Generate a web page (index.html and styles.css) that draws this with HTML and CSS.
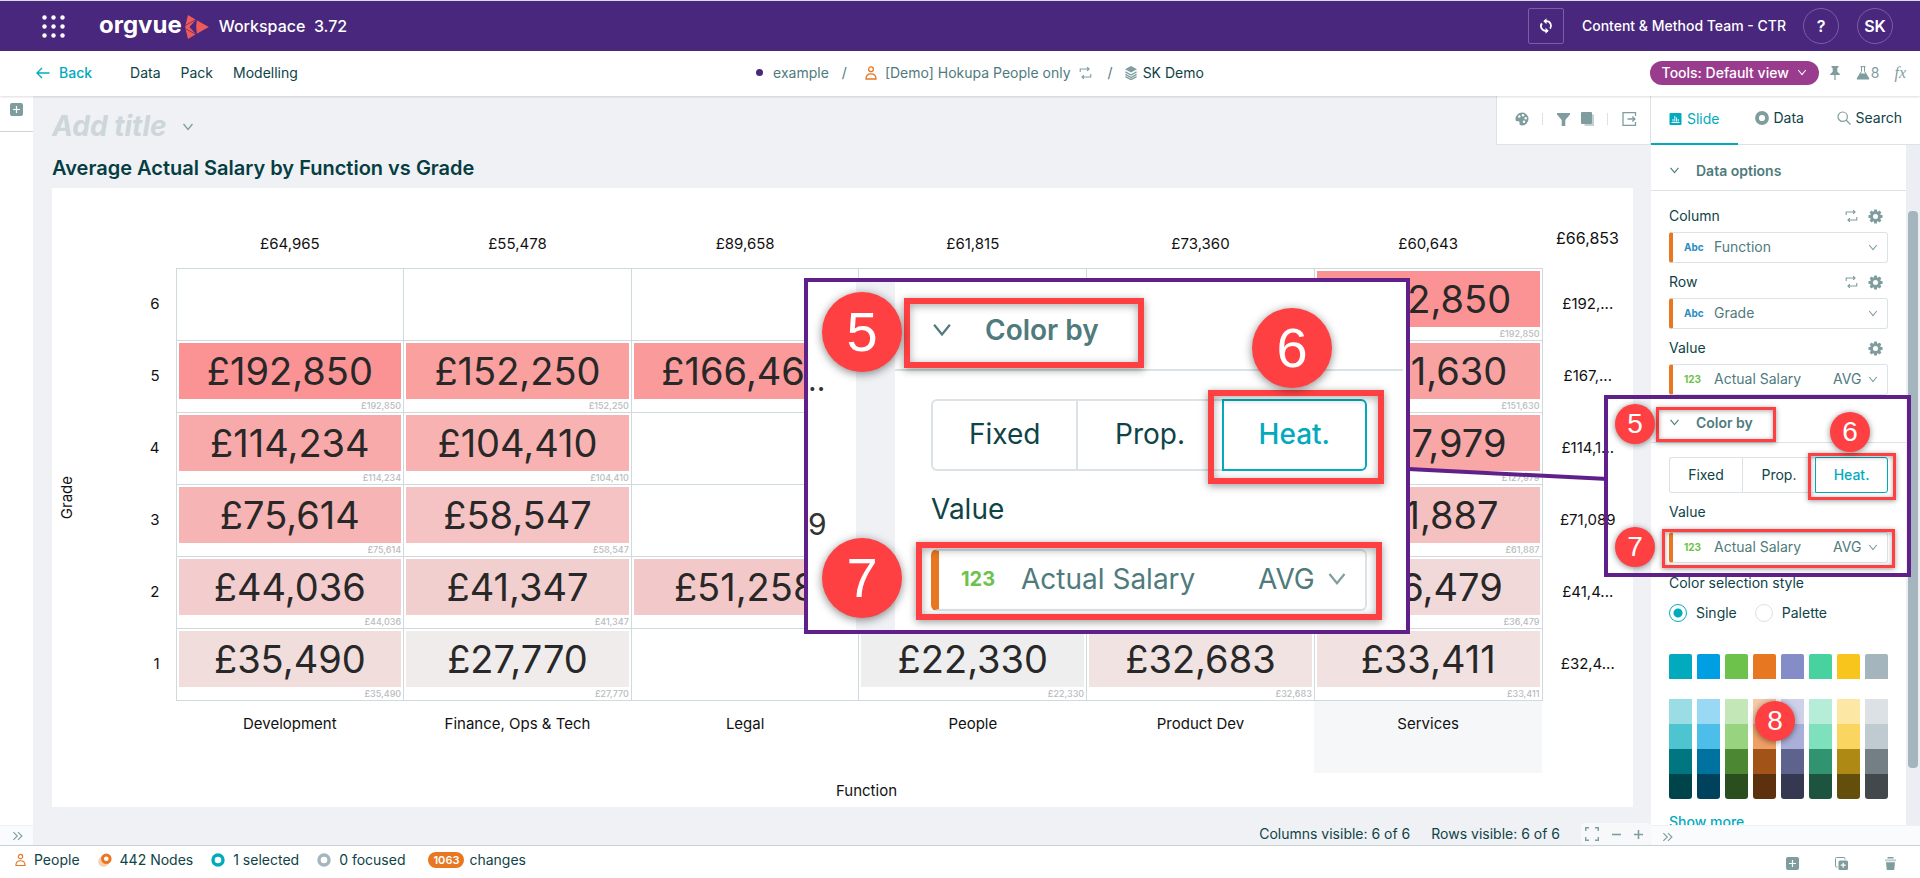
FILE: index.html
```html
<!DOCTYPE html>
<html lang="en">
<head>
<meta charset="utf-8">
<title>Workspace</title>
<link rel="stylesheet" href="styles.css">
</head>
<body>
<svg class="sprite" aria-hidden="true">
  <symbol id="chev" viewBox="0 0 12 8"><path d="M1.500 1 6 6.500l4.500-5.500" fill="none" stroke="currentColor" stroke-width="1.300"/></symbol>
  <symbol id="dchev" viewBox="0 0 12 10"><path d="M1.500.8 5.800 5l-4.300 4.200M6.500.8 10.800 5 6.500 9.200" fill="none" stroke="currentColor" stroke-width="1.200"/></symbol>
  <symbol id="plus" viewBox="0 0 13 13"><rect width="13" height="13" rx="2" fill="currentColor"/><path d="M6.500 3v7M3 6.500h7" stroke="#fff" stroke-width="1.200"/></symbol>
  <symbol id="person" viewBox="0 0 12 14"><circle cx="6" cy="3.300" r="2.400" fill="none" stroke="currentColor" stroke-width="1.300"/><path d="M1 13c0-3.400 2-5.200 5-5.200s5 1.800 5 5.200z" fill="none" stroke="currentColor" stroke-width="1.300"/></symbol>
  <symbol id="repeat" viewBox="0 0 14 14"><path d="M1.300 6V2.700h9M8.800.8l2 1.900-2 1.900M12.700 8v3.300h-9M5.200 13.200l-2-1.900 2-1.900" fill="none" stroke="currentColor" stroke-width="1.200"/></symbol>
  <symbol id="gear" viewBox="0 0 16 16"><g fill="currentColor"><rect x="6.400" y="0.500" width="3.200" height="15" rx=".6"/><rect x="6.400" y="0.500" width="3.200" height="15" rx=".6" transform="rotate(45 8 8)"/><rect x="6.400" y="0.500" width="3.200" height="15" rx=".6" transform="rotate(90 8 8)"/><rect x="6.400" y="0.500" width="3.200" height="15" rx=".6" transform="rotate(135 8 8)"/><circle cx="8" cy="8" r="5.800"/></g><circle cx="8" cy="8" r="2.700" fill="#fff"/></symbol>
</svg>

<header class="topbar">
  <svg class="dots" viewBox="0 0 24 24" fill="#fff"><circle cx="2.500" cy="2.500" r="2.200"/><circle cx="11.500" cy="2.500" r="2.200"/><circle cx="20.500" cy="2.500" r="2.200"/><circle cx="2.500" cy="11.500" r="2.200"/><circle cx="11.500" cy="11.500" r="2.200"/><circle cx="20.500" cy="11.500" r="2.200"/><circle cx="2.500" cy="20.500" r="2.200"/><circle cx="11.500" cy="20.500" r="2.200"/><circle cx="20.500" cy="20.500" r="2.200"/></svg>
  <span class="brand">orgvue</span>
  <svg class="brand-mark" viewBox="0 0 24 24" fill="#ee5a5a"><path d="M3 0 10.500 4.500.5 10z"/><path d="M.5 14 10.500 19.500 3 24z"/><path d="M11.800 5.300 23.800 12l-12 6.700-.6-6.700z"/><path d="M.3 10.800 10.800 5 4.500 12l6.300 7L.3 13.200z"/></svg>
  <span class="product">Workspace&nbsp; 3.72</span>
  <button class="sync" aria-label="Sync"><svg viewBox="0 0 14 16" fill="none" stroke="#fff" stroke-width="1.800"><path d="M5 3.200h2.500a4.600 4.600 0 0 1 3.600 7.400M9 12.800H6.500a4.600 4.600 0 0 1-3.600-7.400"/><path d="M7.500.2v6L4.300 3.200zM6.500 15.800v-6l3.200 3z" fill="#fff" stroke="none"/></svg></button>
  <span class="tenant">Content &amp; Method Team - CTR</span>
  <button class="round">?</button>
  <button class="round user">SK</button>
</header>

<nav class="navbar">
  <div class="menu">
    <a class="back" href="#"><svg viewBox="0 0 14 12" fill="none" stroke="currentColor" stroke-width="1.300"><path d="M13.500 6H1.200M6 1 1 6l5 5"/></svg>Back</a>
    <a href="#">Data</a><a href="#">Pack</a><a href="#">Modelling</a>
  </div>
  <div class="crumbs">
    <i class="dot"></i><a href="#">example</a><span class="slash">/</span>
    <svg class="i-person"><use href="#person"/></svg><a href="#">[Demo] Hokupa People only</a><svg class="i-repeat"><use href="#repeat"/></svg><span class="slash wide">/</span>
    <svg class="i-layers" viewBox="0 0 12 14"><path d="M6 0l6 3.300-6 3.300L0 3.300z" fill="currentColor"/><path d="M.4 5.900 6 9l5.600-3.100M.4 8.400 6 11.500l5.600-3.100M.4 10.600 6 13.600l5.600-3" fill="none" stroke="currentColor" stroke-width="1.300"/></svg><strong>SK Demo</strong>
  </div>
  <div class="tools">
    <button class="pill">Tools: Default view<svg><use href="#chev"/></svg></button>
    <svg class="i-pin" viewBox="0 0 10 14" fill="currentColor"><path d="M1.500 0h7v1.200l-1.200.8v3.800L9.800 8v1H5.600v5H4.400V9H.2V8l2.500-2.200V2l-1.200-.8z"/></svg>
    <span class="flask"><svg viewBox="0 0 14 14"><path d="M4.500.6h5M5.500.6v4.900L1.200 12.500h11.600L8.500 5.500V.6" fill="none" stroke="currentColor"/><path d="M4 7.500h6l3.300 6H.7z" fill="currentColor"/></svg>8</span>
    <span class="fx">fx</span>
  </div>
</nav>

<main class="workspace">
  <aside class="rail">
    <button class="rail-add" aria-label="Add slide"><svg><use href="#plus"/></svg></button>
    <button class="rail-open" aria-label="Expand"><svg><use href="#dchev"/></svg></button>
  </aside>

  <section class="canvas">
    <div class="canvas-head">
      <input class="title-input" type="text" placeholder="Add title" aria-label="Slide title">
      <svg class="title-chev"><use href="#chev"/></svg>
      <div class="toolbar">
        <svg class="t-palette" viewBox="0 0 14 14"><path d="M7 .5a6.500 6.500 0 0 0-6.500 6.600C.5 9 1.300 9.500 2.500 9.200c1.500-.3 2.300.3 2 1.800-.3 1.600.5 2.500 2.500 2.500A6.500 6.500 0 0 0 7 .5z" fill="currentColor"/><g fill="#fff"><circle cx="4.300" cy="4.500" r="1.200"/><circle cx="8" cy="3.300" r="1.200"/><circle cx="10.700" cy="6.300" r="1.200"/><circle cx="9" cy="9.800" r="1.200"/></g></svg>
        <i class="sep"></i>
        <svg class="t-funnel" viewBox="0 0 13 13"><path d="M0 0h13v1.500L8.300 7v6H4.700V7L0 1.500z" fill="currentColor"/></svg>
        <svg class="t-copy" viewBox="0 0 13 14"><path d="M3.500 2.500H13V14H3.500z" fill="#c4d0d1"/><rect width="11" height="12" rx="1" fill="currentColor"/></svg>
        <i class="sep"></i>
        <svg class="t-export" viewBox="0 0 15 14" fill="none" stroke="currentColor" stroke-width="1.300"><path d="M13.500 4V.7H1v12.600h12.500V10M5.500 7h7.300M10.300 4.500 12.900 7l-2.600 2.500"/></svg>
      </div>
    </div>
    <h1 class="chart-title">Average Actual Salary by Function vs Grade</h1>

    <div class="card">
      <div class="y-label"><span>Grade</span></div>
      <div class="plot">
        <table class="heat">
          <colgroup><col class="c-label"><col><col><col><col><col><col><col class="c-total"></colgroup>
          <thead><tr><td></td><th>£64,965</th><th>£55,478</th><th>£89,658</th><th>£61,815</th><th>£73,360</th><th>£60,643</th><th class="grand">£66,853</th></tr></thead>
          <tbody>
            <tr><th>6</th><td></td><td></td><td></td><td></td><td></td><td><b style="background:#fb9293">£192,850</b><small>£192,850</small></td><td class="total">£192,...</td></tr>
            <tr><th>5</th><td><b style="background:#fb9293">£192,850</b><small>£192,850</small></td><td><b style="background:#faa09f">£152,250</b><small>£152,250</small></td><td><b style="background:#fa9a9a">£166,460</b></td><td></td><td></td><td><b style="background:#f8a2a2">£151,630</b><small>£151,630</small></td><td class="total">£167,...</td></tr>
            <tr><th>4</th><td><b style="background:#f8aaaa">£114,234</b><small>£114,234</small></td><td><b style="background:#f7b2b1">£104,410</b><small>£104,410</small></td><td></td><td></td><td></td><td><b style="background:#f9a6a6">£127,979</b><small>£127,979</small></td><td class="total">£114,1...</td></tr>
            <tr><th>3</th><td><b style="background:#f7b4b4">£75,614</b><small>£75,614</small></td><td><b style="background:#f5c3c3">£58,547</b><small>£58,547</small></td><td></td><td></td><td></td><td><b style="background:#f5c1c0">£61,887</b><small>£61,887</small></td><td class="total">£71,089</td></tr>
            <tr><th>2</th><td><b style="background:#f3cdcd">£44,036</b><small>£44,036</small></td><td><b style="background:#f2cfcf">£41,347</b><small>£41,347</small></td><td><b style="background:#f3c8c8">£51,258</b></td><td></td><td></td><td><b style="background:#f2d9d9">£36,479</b><small>£36,479</small></td><td class="total">£41,4...</td></tr>
            <tr><th>1</th><td><b style="background:#f0dddc">£35,490</b><small>£35,490</small></td><td><b style="background:#f0eceb">£27,770</b><small>£27,770</small></td><td></td><td><b style="background:#eeeeee">£22,330</b><small>£22,330</small></td><td><b style="background:#f0e3e2">£32,683</b><small>£32,683</small></td><td><b style="background:#f1e1e0">£33,411</b><small>£33,411</small></td><td class="total">£32,4...</td></tr>
          </tbody>
          <tfoot><tr><td></td><th>Development</th><th>Finance, Ops &amp; Tech</th><th>Legal</th><th>People</th><th>Product Dev</th><th class="hover">Services</th><td></td></tr></tfoot>
        </table>
        <div class="x-label">Function</div>
      </div>
    </div>

    <div class="canvas-foot">
      <span>Columns visible: 6 of 6</span><span>Rows visible: 6 of 6</span>
      <div class="zoomer">
        <svg viewBox="0 0 14 14" fill="none" stroke="currentColor" stroke-width="1.400"><path d="M.7 4V.7H4M10 .7h3.300V4M13.300 10v3.300H10M4 13.300H.7V10"/></svg>
        <svg class="z-minus" viewBox="0 0 8 8" stroke="currentColor" stroke-width="1.400"><path d="M0 4h8"/></svg>
        <svg class="z-plus" viewBox="0 0 8 8" stroke="currentColor" stroke-width="1.400"><path d="M0 4h8M4 0v8"/></svg>
      </div>
    </div>
  </section>

  <aside class="panel">
    <div class="tabs">
      <button class="tab on"><svg viewBox="0 0 12 12"><rect width="12" height="12" rx="1" fill="currentColor"/><path d="M2 9.500h8M3.500 8.500V6M5.300 8.500V3M7 8.500V4.500M8.700 8.500V6" stroke="#fff" stroke-width=".9"/></svg>Slide</button>
      <button class="tab"><svg viewBox="0 0 14 14"><circle cx="7" cy="7" r="5" fill="none" stroke="#7f9d9e" stroke-width="3.800"/></svg>Data</button>
      <button class="tab"><svg viewBox="0 0 14 14" fill="none" stroke="#7f9d9e" stroke-width="1.200"><circle cx="5.700" cy="5.700" r="4.700"/><path d="m9 9 4.500 4.500"/></svg>Search</button>
    </div>
    <div class="panel-body">
      <div class="scroller">
        <h2 class="group"><svg><use href="#chev"/></svg>Data options</h2>
        <div class="fields">
          <div class="label-row"><label for="col">Column</label><svg class="i-repeat"><use href="#repeat"/></svg><svg class="i-gear"><use href="#gear"/></svg></div>
          <div class="drop"><span class="type abc">Abc</span><select id="col"><option>Function</option></select><svg><use href="#chev"/></svg></div>
          <div class="label-row"><label for="row">Row</label><svg class="i-repeat"><use href="#repeat"/></svg><svg class="i-gear"><use href="#gear"/></svg></div>
          <div class="drop"><span class="type abc">Abc</span><select id="row"><option>Grade</option></select><svg><use href="#chev"/></svg></div>
          <div class="label-row"><label for="val">Value</label><svg class="i-gear"><use href="#gear"/></svg></div>
          <div class="drop"><span class="type digits">123</span><select id="val"><option>Actual Salary</option></select><select class="agg" aria-label="Aggregate"><option>AVG</option></select><svg><use href="#chev"/></svg></div>
        </div>
        <h2 class="group"><svg><use href="#chev"/></svg>Color by</h2>
        <div class="fields color">
          <div class="seg"><button>Fixed</button><button>Prop.</button><button class="on">Heat.</button></div>
          <div class="label-row"><label for="cval">Value</label></div>
          <div class="drop"><span class="type digits">123</span><select id="cval"><option>Actual Salary</option></select><select class="agg" aria-label="Color aggregate"><option>AVG</option></select><svg><use href="#chev"/></svg></div>
          <div class="style-label">Color selection style</div>
          <div class="radios"><label><input type="radio" name="style" checked>Single</label><label><input type="radio" name="style">Palette</label></div>
          <div class="swatches"><i style="background:#02aabd"></i><i style="background:#009fe3"></i><i style="background:#6cc24a"></i><i style="background:#e87722"></i><i style="background:#858dc8"></i><i style="background:#48d2a0"></i><i style="background:#f8c51c"></i><i style="background:#a4b5bd"></i></div>
          <div class="shades">
            <div><i style="background:#9bdde4"></i><i style="background:#4ec4d1"></i><i style="background:#007680"></i><i style="background:#00444b"></i></div>
            <div><i style="background:#99d9f3"></i><i style="background:#4dbdea"></i><i style="background:#00729f"></i><i style="background:#00425b"></i></div>
            <div><i style="background:#c4e7b7"></i><i style="background:#98d480"></i><i style="background:#4c8834"></i><i style="background:#2b4e1e"></i></div>
            <div><i style="background:#f6c9a7"></i><i style="background:#f0a066"></i><i style="background:#a25318"></i><i style="background:#5d300e"></i></div>
            <div><i style="background:#ced1e9"></i><i style="background:#a9afd9"></i><i style="background:#5d638c"></i><i style="background:#353850"></i></div>
            <div><i style="background:#b6edd9"></i><i style="background:#7fe0bc"></i><i style="background:#329370"></i><i style="background:#1d5440"></i></div>
            <div><i style="background:#fce8a4"></i><i style="background:#fad660"></i><i style="background:#ae8a14"></i><i style="background:#634f0b"></i></div>
            <div><i style="background:#dbe1e5"></i><i style="background:#bfcbd1"></i><i style="background:#737f84"></i><i style="background:#42484b"></i></div>
          </div>
          <a class="more" href="#">Show more</a>
        </div>
      </div>
      <div class="track"><i class="thumb"></i></div>
    </div>
    <div class="panel-foot"><svg><use href="#dchev"/></svg></div>
  </aside>
</main>

<footer class="status">
  <svg class="i-person"><use href="#person"/></svg><span class="s1">People</span>
  <svg class="ring" viewBox="0 0 14 14"><circle cx="5.500" cy="8.500" r="5.300" fill="#f8d0b0"/><circle cx="8.300" cy="5.700" r="3.800" fill="#fff" stroke="#e87722" stroke-width="3"/></svg><span class="s2">442 Nodes</span>
  <svg class="ring" viewBox="0 0 14 14"><circle cx="7" cy="7" r="5" fill="none" stroke="#02aabd" stroke-width="3.400"/></svg><span class="s2">1 selected</span>
  <svg class="ring" viewBox="0 0 14 14"><circle cx="7" cy="7" r="5" fill="none" stroke="#a4b5bd" stroke-width="3.400"/></svg><span class="s3">0 focused</span>
  <span class="count">1063</span><span>changes</span>
  <div class="actions">
    <button aria-label="Add"><svg><use href="#plus"/></svg></button>
    <button aria-label="Duplicate"><svg viewBox="0 0 13 13"><path d="M2.500 10H1.500a1 1 0 0 1-1-1V1.500a1 1 0 0 1 1-1H9a1 1 0 0 1 1 1v1" fill="none" stroke="currentColor"/><rect x="3.500" y="3.500" width="9.500" height="9.500" rx="1.500" fill="currentColor"/><path d="M8.200 5.700v5M5.700 8.200h5" stroke="#fff" stroke-width="1.200"/></svg></button>
    <button aria-label="Delete"><svg viewBox="0 0 13 13" fill="currentColor"><path d="M3.500 0h6v1.500h-6z"/><path d="M1 2.300h11v2H1z" opacity=".5"/><path d="M2 5.300h9L10.200 13H2.800z"/></svg></button>
  </div>
</footer>

<div class="notes">
  <svg class="link" viewBox="0 0 200 16" preserveAspectRatio="none"><path d="M0 3 200 13" stroke="#5f2189" stroke-width="4"/></svg>
  <div class="frame">
    <i class="mark m-title"></i><i class="mark m-heat"></i><i class="mark m-drop"></i>
    <b class="num n5">5</b><b class="num n6">6</b><b class="num n7">7</b>
  </div>
  <b class="num n8">8</b>
  <div class="lens">
    <div class="lens-side"><span class="cut-dots">..</span><span class="cut-nine">9</span></div>
    <div class="lens-gap"></div>
    <div class="lens-panel">
      <h2 class="group"><svg><use href="#chev"/></svg>Color by</h2>
      <div class="fields color">
        <div class="seg"><button>Fixed</button><button>Prop.</button><button class="on">Heat.</button></div>
        <div class="label-row"><label for="lval">Value</label></div>
        <div class="drop"><span class="type digits">123</span><select id="lval"><option>Actual Salary</option></select><select class="agg" aria-label="Enlarged aggregate"><option>AVG</option></select><svg><use href="#chev"/></svg></div>
      </div>
    </div>
    <i class="mark m-title"></i><i class="mark m-heat"></i><i class="mark m-drop"></i>
    <b class="num n5">5</b><b class="num n6">6</b><b class="num n7">7</b>
  </div>
</div>
</body>
</html>
```
FILE: styles.css
```css
* { box-sizing: border-box; }
:root {
  --u: 1px;
  --ink: #0e4347;
  --mid: #4f7b7d;
  --soft: #7f9d9e;
  --teal: #02aabd;
  --line: #dbe3e6;
  --orange: #e87722;
}
body {
  margin: 0;
  height: 100vh;
  display: flex;
  flex-direction: column;
  position: relative;
  overflow: hidden;
  font: 14px/20px Inter, "Liberation Sans", sans-serif;
  color: var(--ink);
  background: #fff;
}
button, input, select { font: inherit; color: inherit; background: none; border: 0; padding: 0; margin: 0; }
select { appearance: none; outline: 0; }
a { color: inherit; text-decoration: none; }
svg { display: block; flex: none; }
i { display: block; }
.sprite { position: absolute; width: 0; height: 0; }

/* Top bar */
.topbar {
  display: flex;
  align-items: center;
  height: 51px;
  flex: none;
  padding: 0 27px 0 42px;
  background: #48277c;
  border-top: 1px solid #dcdde6;
  color: #fff;
}
.dots { width: 24px; height: 24px; margin: 2px 33px 0 0; }
.brand { font: 700 24px/24px Inter, sans-serif; margin: 0 3px 2px 0; }
.brand-mark { width: 24px; height: 24px; margin: 1px 10px 0 0; }
.product { font-size: 16px; font-weight: 500; }
.sync { display: grid; place-items: center; width: 36px; height: 36px; margin-left: auto; border: 1px solid #7a5fa3; border-radius: 2px; }
.sync svg { width: 14px; height: 16px; }
.tenant { font-weight: 500; margin: 0 17px 0 18px; }
.round { width: 36px; height: 36px; border: 1px solid #7a5fa3; border-radius: 50%; font-size: 16px; font-weight: 600; margin-right: 18px; }
.user { margin-right: 0; }

/* Navigation */
.navbar {
  display: grid;
  grid-template-columns: 1fr auto 1fr;
  align-items: center;
  height: 45px;
  flex: none;
  padding: 0 14px 2px 36px;
  box-shadow: 0 1px 2px #0002;
  z-index: 1;
}
.menu { display: flex; gap: 20px; }
.back { display: flex; align-items: center; gap: 9px; color: var(--teal); font-weight: 500; margin-right: 18px; }
.back svg { width: 14px; height: 12px; }
.crumbs { display: flex; align-items: center; padding-left: 18px; color: var(--mid); }
.crumbs strong { font-weight: 400; color: var(--ink); }
.dot { width: 7px; height: 7px; border-radius: 50%; background: #48277c; margin-right: 10px; }
.slash { margin: 0 18px 0 13px; }
.slash.wide { margin: 0 12px 0 16px; }
.i-person { width: 12px; height: 14px; color: var(--orange); margin-right: 8px; }
.i-repeat { width: 13px; height: 14px; color: var(--soft); }
.crumbs .i-repeat { margin-left: 8px; }
.i-layers { width: 12px; height: 14px; color: var(--soft); margin-right: 6px; }
.tools { display: flex; align-items: center; justify-content: flex-end; color: var(--soft); }
.pill { display: flex; align-items: center; gap: 8px; height: 24px; padding: 0 12px; border-radius: 12px; background: #9a3c8d; color: #fff; font-weight: 500; }
.pill svg { width: 10px; height: 7px; }
.i-pin { width: 10px; height: 14px; margin: 0 16px 0 11px; }
.flask { display: flex; align-items: center; gap: 1px; }
.flask svg { width: 14px; height: 14px; }
.fx { font: italic 16px/20px "Liberation Serif", serif; margin-left: 15px; }

/* Workspace */
.workspace { display: grid; grid-template-columns: 33px 1fr 269px; flex: 1; min-height: 0; }
.rail { display: flex; flex-direction: column; justify-content: space-between; }
.rail-add { height: 36px; padding: 4px 0 0 10px; border-bottom: 1px solid #cbd5d7; color: var(--soft); }
.rail-add svg { width: 13px; height: 13px; margin-bottom: 12px; }
.rail-open { height: 20px; padding-left: 12px; background: #f9fbfc; border-top: 1px solid #edf1f3; color: var(--soft); }
.rail-open svg { width: 11px; height: 10px; }

.canvas { display: flex; flex-direction: column; min-width: 0; background: #f0f1f5; }
.canvas-head { display: flex; align-items: flex-start; padding-left: 19px; }
.title-input { width: 124px; height: 34px; margin-top: 13px; font: italic 700 28px/34px Inter, sans-serif; }
.title-input::placeholder { color: #cdd6da; opacity: 1; }
.title-chev { width: 12px; height: 8px; margin: 27px auto 0 6px; color: var(--soft); }
.toolbar { display: flex; align-items: center; height: 49px; padding: 0 13px 2px 18px; background: #fff; border: solid var(--line); border-width: 0 1px 1px 1px; color: var(--soft); }
.t-palette { width: 14px; height: 14px; }
.sep { width: 1px; height: 12px; background: var(--line); margin: 0 14px 0 13px; }
.t-funnel { width: 13px; height: 13px; margin-right: 11px; }
.t-copy { width: 13px; height: 14px; }
.t-export { width: 15px; height: 14px; }
.chart-title { margin: 11px 0 8px 19px; font-size: 20px; line-height: 24px; font-weight: 600; color: #063d42; }

.card { flex: 1; display: flex; min-height: 0; margin: 0 18px 0 19px; background: #fff; color: #111; }
.y-label { width: 30px; display: grid; place-items: center; flex: none; font-size: 15px; }
.y-label span { writing-mode: vertical-rl; transform: rotate(180deg); }
.plot { flex: 1; min-width: 0; }
.heat { width: 100%; table-layout: fixed; border-collapse: collapse; border-spacing: 0; font-size: 15px; }
.heat th { font-weight: 400; }
.heat td, .heat th { padding: 0; }
.c-label { width: 94px; }
.c-total { width: 91px; }
.heat thead tr { height: 80px; }
.heat thead th { padding-top: 32px; }
.heat thead .grand { font-size: 16px; padding: 20px 0 0; }
.heat tbody tr { height: 72px; }
.heat tbody th { text-align: right; padding-right: 16px; }
.heat tbody td { border: 1px solid #cfdadd; vertical-align: top; }
.heat tbody td.total { border: 0; vertical-align: middle; text-align: center; }
.heat b { display: block; height: 56px; margin: 2px 2px 0; text-align: center; font-weight: 400; font-size: 38px; line-height: 56px; color: #282828; }
.heat small { display: block; height: 13px; padding: 1px 2px 0 0; text-align: right; font-size: 9px; line-height: 12px; color: #b9bcbe; font-weight: 500; }
.heat tfoot tr { height: 73px; }
.heat tfoot th { vertical-align: top; padding-top: 13px; }
.heat tfoot .hover { background: #f5f7f9; }
.x-label { margin-top: 8px; padding-left: 18px; text-align: center; font-size: 15px; }

.canvas-foot { display: flex; align-items: center; justify-content: flex-end; gap: 21px; height: 38px; flex: none; padding-top: 16px; }
.zoomer { display: flex; align-items: center; gap: 13px; height: 22px; padding: 0 8px 0 4px; background: #f6f8fa; border-radius: 4px; color: var(--soft); }
.zoomer svg { width: 14px; height: 14px; }
.zoomer .z-minus, .zoomer .z-plus { width: 9px; height: 9px; }

/* Settings panel */
.panel { display: flex; flex-direction: column; min-height: 0; background: #fff; }
.tabs { display: flex; height: 49px; flex: none; border-bottom: 1px solid var(--line); padding-right: 18px; }
.tab { display: flex; align-items: center; gap: 5px; padding-bottom: 4px; }
.tab svg { width: 14px; height: 14px; }
.tab:last-child { margin-left: auto; }
.tab.on { color: var(--teal); padding: 0 18px 2px; border-bottom: 2px solid var(--teal); margin: 0 17px -1px 0; }
.tab.on svg { width: 13px; height: 12px; }
.panel-body { display: flex; flex: 1; min-height: 0; }
.scroller { flex: 1; overflow: hidden; }
.track { width: 14px; padding: 66px 2px 0; background: #ebeff3; }
.thumb { height: 557px; border-radius: 4px; background: #a4b5bd; }
.panel-foot { height: 20px; flex: none; padding: 6px 0 0 11px; background: #f9fbfc; border-top: 1px solid #edf1f3; color: var(--soft); }
.panel-foot svg { width: 11px; height: 10px; }

.group { display: flex; align-items: center; margin: 0; height: calc(var(--u) * 46); padding: calc(var(--u) * 6) 0 0 calc(var(--u) * 18); border-bottom: var(--u) solid var(--line); font-size: calc(var(--u) * 14); line-height: calc(var(--u) * 20); font-weight: 600; color: var(--mid); }
.group svg { width: calc(var(--u) * 11); height: calc(var(--u) * 7); margin-right: calc(var(--u) * 16); }
.fields { padding: calc(var(--u) * 11) calc(var(--u) * 18) 0; font-size: calc(var(--u) * 14); line-height: calc(var(--u) * 20); }
.fields.color { padding-top: calc(var(--u) * 14); }
.label-row { display: flex; align-items: center; gap: calc(var(--u) * 10); height: calc(var(--u) * 30); padding: 0 calc(var(--u) * 5) calc(var(--u) * 2) 0; }
.drop + .label-row { margin-top: calc(var(--u) * 5); }
.label-row label { margin-right: auto; }
.i-gear { width: 15px; height: 15px; color: var(--soft); }
.drop { display: flex; align-items: center; height: calc(var(--u) * 31); border: var(--u) solid var(--line); border-left: calc(var(--u) * 4) solid var(--orange); border-radius: calc(var(--u) * 3); padding: 0 calc(var(--u) * 9) var(--u) 0; color: var(--mid); }
.drop select:not(.agg) { flex: 1; min-width: 0; }
.agg { margin-right: calc(var(--u) * 6); }
.drop svg { width: calc(var(--u) * 10); height: calc(var(--u) * 7); color: var(--soft); }
.type { width: calc(var(--u) * 41); padding-left: calc(var(--u) * 11); font-size: calc(var(--u) * 10); font-weight: 700; }
.abc { color: #2b8cc4; }
.digits { color: #6cc24a; }
.seg { display: grid; grid-template-columns: 1fr 1fr 1fr; height: calc(var(--u) * 36); margin-bottom: calc(var(--u) * 5); }
.seg button { border: var(--u) solid var(--line); border-right: 0; padding-bottom: var(--u); }
.seg button:first-child { border-radius: calc(var(--u) * 3) 0 0 calc(var(--u) * 3); }
.seg .on { border: var(--u) solid var(--teal); border-radius: 0 calc(var(--u) * 3) calc(var(--u) * 3) 0; color: var(--teal); font-weight: 500; }
.seg + .label-row + .drop { margin-top: calc(var(--u) * 4); }
.scroller .group + .fields + .group { margin-top: 2px; }
.style-label { margin-top: 10px; }
.radios { display: flex; gap: 18px; margin-top: 10px; }
.radios label { display: flex; align-items: center; gap: 9px; }
.radios input { appearance: none; width: 18px; height: 18px; border: 1px solid var(--line); border-radius: 50%; }
.radios input:checked { border-color: var(--teal); background: radial-gradient(circle, var(--teal) 4px, #fff 5px); }
.swatches, .shades { display: flex; gap: 5px; }
.swatches { margin: 31px 0 20px; }
.swatches i { flex: 1; height: 25px; border-radius: 2px 2px 0 0; }
.shades div { flex: 1; border-radius: 0 0 3px 3px; overflow: hidden; }
.shades i { height: 25px; }
.more { display: block; margin-top: 13px; color: var(--teal); font-weight: 500; }

/* Status bar */
.status { display: flex; align-items: center; height: 33px; flex: none; padding: 0 23px 5px 15px; border-top: 1px solid #c8d3d6; }
.status .i-person { width: 11px; margin-right: 8px; }
.ring { width: 14px; height: 14px; margin-right: 8px; }
.s1, .s2 { margin-right: 18px; }
.s3 { margin-right: 23px; }
.count { height: 16px; padding: 0 5px; margin-right: 5px; border-radius: 8px; background: var(--orange); color: #fff; font-size: 11px; line-height: 16px; font-weight: 600; }
.actions { display: flex; gap: 36px; margin: 8px 0 0 auto; color: var(--soft); }
.actions svg { width: 13px; height: 13px; }

/* Numbered notes laid over the page */
.notes { position: absolute; inset: 0; pointer-events: none; z-index: 2; }
.mark { position: absolute; border: 3px solid #fe4042; box-shadow: 0 1px 5px #0006, inset 0 1px 5px #0005; }
.num { position: absolute; display: grid; place-items: center; width: 40px; height: 40px; border-radius: 50%; background: #fe4042; color: #fff; font: 400 28px/40px "Liberation Sans", sans-serif; box-shadow: 0 1px 6px #0007; }
.frame { position: absolute; right: 9px; top: 395px; width: 307px; height: 182px; border: 4px solid #5f2189; }
.frame .m-title { left: 48px; top: 8px; width: 120px; height: 35px; }
.frame .m-heat { left: 200px; top: 54px; width: 88px; height: 47px; }
.frame .m-drop { left: 54px; top: 130px; width: 233px; height: 39px; }
.frame .n5 { left: 7px; top: 5px; }
.frame .n6 { left: 222px; top: 13px; }
.frame .n7 { left: 7px; top: 128px; }
.n8 { right: 125px; top: 701px; }
.link { position: absolute; right: 312px; top: 466px; width: 200px; height: 16px; }
.lens { --u: 2px; position: absolute; right: 510px; top: 278px; width: 606px; height: 356px; border: 4px solid #5f2189; background: #fff; display: flex; overflow: hidden; }
.lens-side { width: 48px; color: #333; font-size: 30px; line-height: 36px; flex: none; }
.lens-side span { display: block; }
.cut-dots { padding-top: 80px; }
.cut-nine { padding-top: 108px; }
.lens-gap { width: 39px; background: #f0f1f5; flex: none; }
.lens-panel { flex: 1; padding-right: 3px; margin-top: -3px; }
.lens .mark { border-width: 6px; box-shadow: 0 2px 8px #0006, inset 0 2px 8px #0005; }
.lens .num { width: 80px; height: 80px; font-size: 56px; line-height: 80px; box-shadow: 0 2px 10px #0007; }
.lens .m-title { left: 96px; top: 16px; width: 240px; height: 70px; }
.lens .m-heat { left: 400px; top: 108px; width: 176px; height: 94px; }
.lens .m-drop { left: 108px; top: 260px; width: 466px; height: 78px; }
.lens .n5 { left: 14px; top: 10px; }
.lens .n6 { left: 444px; top: 26px; }
.lens .n7 { left: 14px; top: 256px; }
```
